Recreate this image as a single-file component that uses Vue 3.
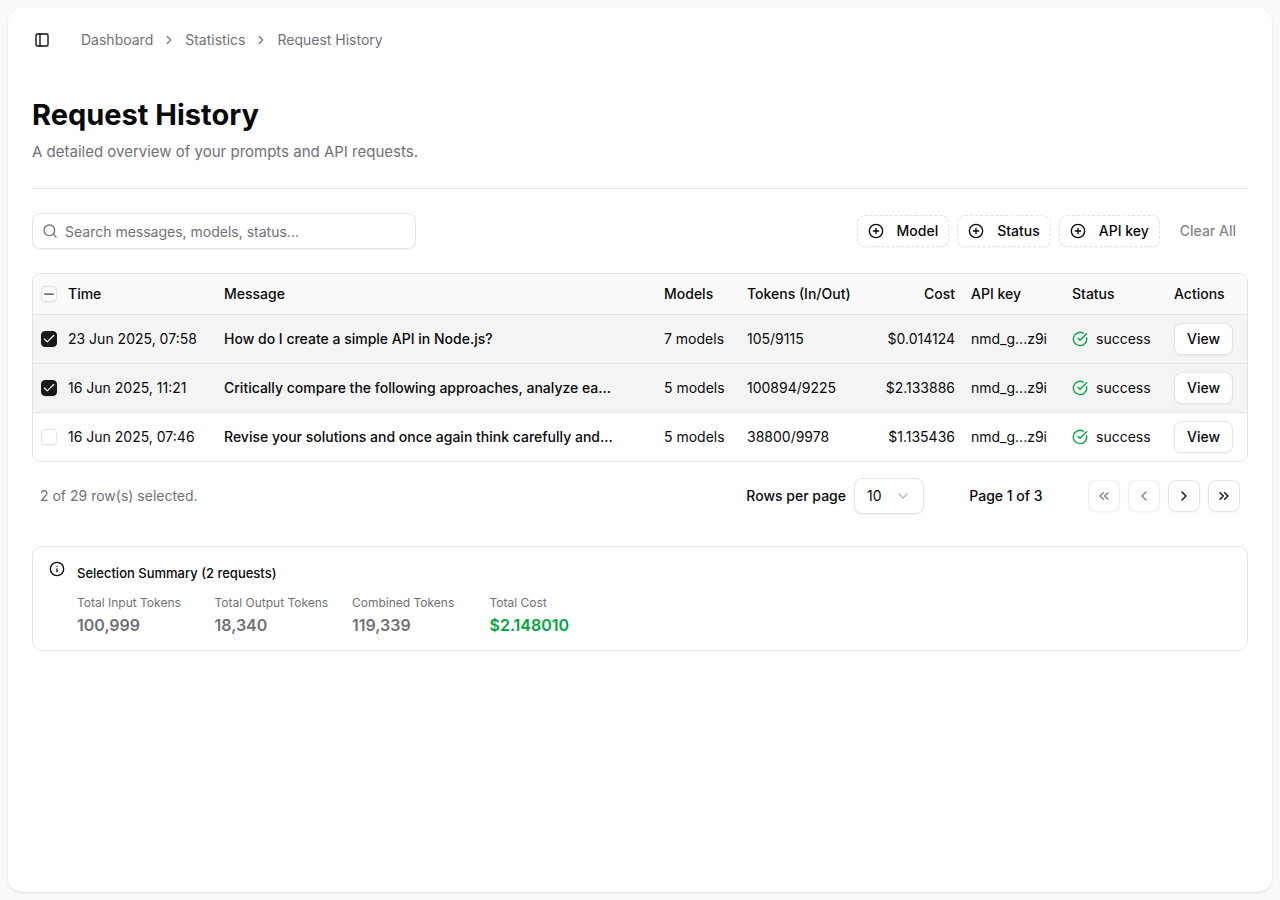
<script setup>
import { computed, ref } from 'vue'

const crumbs = ['Dashboard', 'Statistics', 'Request History']
const filters = ['Model', 'Status', 'API key']
const search = ref('')
const pageSize = ref('10')

const rows = ref([
  { id: 1, time: '23 Jun 2025, 07:58', message: 'How do I create a simple API in Node.js?', models: '7 models', tokens: '105/9115', cost: '$0.014124', key: 'nmd_g...z9i', status: 'success', selected: true },
  { id: 2, time: '16 Jun 2025, 11:21', message: 'Critically compare the following approaches, analyze ea...', models: '5 models', tokens: '100894/9225', cost: '$2.133886', key: 'nmd_g...z9i', status: 'success', selected: true },
  { id: 3, time: '16 Jun 2025, 07:46', message: 'Revise your solutions and once again think carefully and...', models: '5 models', tokens: '38800/9978', cost: '$1.135436', key: 'nmd_g...z9i', status: 'success', selected: false },
])

const picked = computed(() => rows.value.filter((r) => r.selected))
const allSelected = computed(() => picked.value.length === rows.value.length)
const someSelected = computed(() => picked.value.length > 0 && !allSelected.value)

function toggleAll(event) {
  const on = event.target.checked
  rows.value.forEach((r) => { r.selected = on })
}

const summary = computed(() => {
  const part = (i) => picked.value.reduce((sum, r) => sum + Number(r.tokens.split('/')[i]), 0)
  const cost = picked.value.reduce((sum, r) => sum + Number(r.cost.slice(1)), 0)
  const fmt = (n) => n.toLocaleString('en-US')
  return [
    { label: 'Total Input Tokens', value: fmt(part(0)) },
    { label: 'Total Output Tokens', value: fmt(part(1)) },
    { label: 'Combined Tokens', value: fmt(part(0) + part(1)) },
    { label: 'Total Cost', value: '$' + cost.toFixed(6), money: true },
  ]
})
</script>

<template>
  <div class="shell">
    <div class="panel">
      <header class="topbar">
        <button class="toggle" type="button" aria-label="Toggle sidebar">
          <svg class="icon" viewBox="0 0 24 24"><rect width="18" height="18" x="3" y="3" rx="2" /><path d="M9 3v18" /></svg>
        </button>
        <nav class="crumbs" aria-label="Breadcrumb">
          <template v-for="(crumb, i) in crumbs" :key="crumb">
            <svg v-if="i" class="icon small" viewBox="0 0 24 24"><path d="m9 18 6-6-6-6" /></svg>
            <a href="#">{{ crumb }}</a>
          </template>
        </nav>
      </header>

      <main class="content">
        <div class="heading">
          <h1>Request History</h1>
          <p>A detailed overview of your prompts and API requests.</p>
        </div>

        <div class="toolbar">
          <div class="search">
            <svg class="icon" viewBox="0 0 24 24"><circle cx="11" cy="11" r="8" /><path d="m21 21-4.3-4.3" /></svg>
            <input v-model="search" type="text" aria-label="Search requests" placeholder="Search messages, models, status..." />
          </div>
          <div class="filters">
            <button v-for="f in filters" :key="f" class="btn filter" type="button">
              <svg class="icon" viewBox="0 0 24 24"><circle cx="12" cy="12" r="10" /><path d="M8 12h8M12 8v8" /></svg>
              <span>{{ f }}</span>
            </button>
            <button class="clear" type="button" disabled>Clear All</button>
          </div>
        </div>

        <div class="table-box">
          <table>
            <colgroup>
              <col class="c-check" /><col class="c-time" /><col /><col class="c-models" /><col class="c-tokens" />
              <col class="c-cost" /><col class="c-key" /><col class="c-status" /><col class="c-actions" />
            </colgroup>
            <thead>
              <tr>
                <th class="pick">
                  <span class="check">
                    <input type="checkbox" aria-label="Select all" :checked="allSelected" :indeterminate="someSelected" @change="toggleAll" />
                    <svg v-if="someSelected" class="dash" viewBox="0 0 24 24"><path d="M5 12h14" /></svg>
                    <svg v-else-if="allSelected" class="tick" viewBox="0 0 24 24"><path d="M20 6 9 17l-5-5" /></svg>
                  </span>
                </th>
                <th>Time</th>
                <th>Message</th>
                <th>Models</th>
                <th>Tokens (In/Out)</th>
                <th class="right">Cost</th>
                <th>API key</th>
                <th>Status</th>
                <th>Actions</th>
              </tr>
            </thead>
            <tbody>
              <tr v-for="r in rows" :key="r.id" :class="{ selected: r.selected }">
                <td class="pick">
                  <span class="check">
                    <input v-model="r.selected" type="checkbox" :aria-label="'Select ' + r.message" />
                    <svg v-if="r.selected" class="tick" viewBox="0 0 24 24"><path d="M20 6 9 17l-5-5" /></svg>
                  </span>
                </td>
                <td>{{ r.time }}</td>
                <td class="message">{{ r.message }}</td>
                <td>{{ r.models }}</td>
                <td>{{ r.tokens }}</td>
                <td class="right">{{ r.cost }}</td>
                <td>{{ r.key }}</td>
                <td>
                  <div class="status">
                    <svg class="icon" viewBox="0 0 24 24"><path d="M21.801 10A10 10 0 1 1 17 3.335" /><path d="m9 11 3 3L22 4" /></svg>
                    <span>{{ r.status }}</span>
                  </div>
                </td>
                <td><button class="btn view" type="button">View</button></td>
              </tr>
            </tbody>
          </table>
        </div>

        <div class="pagination">
          <p class="count">{{ picked.length }} of 29 row(s) selected.</p>
          <div class="pager">
            <div class="size">
              <label for="page-size">Rows per page</label>
              <div class="select">
                <select id="page-size" v-model="pageSize">
                  <option>10</option>
                  <option>20</option>
                  <option>50</option>
                </select>
                <svg class="icon" viewBox="0 0 24 24"><path d="m6 9 6 6 6-6" /></svg>
              </div>
            </div>
            <span class="page">Page 1 of 3</span>
            <div class="steps">
              <button class="btn step" type="button" aria-label="First page" disabled>
                <svg class="icon" viewBox="0 0 24 24"><path d="m11 17-5-5 5-5M18 17l-5-5 5-5" /></svg>
              </button>
              <button class="btn step" type="button" aria-label="Previous page" disabled>
                <svg class="icon" viewBox="0 0 24 24"><path d="m15 18-6-6 6-6" /></svg>
              </button>
              <button class="btn step" type="button" aria-label="Next page">
                <svg class="icon" viewBox="0 0 24 24"><path d="m9 18 6-6-6-6" /></svg>
              </button>
              <button class="btn step" type="button" aria-label="Last page">
                <svg class="icon" viewBox="0 0 24 24"><path d="m6 17 5-5-5-5M13 17l5-5-5-5" /></svg>
              </button>
            </div>
          </div>
        </div>

        <section class="summary">
          <svg class="icon" viewBox="0 0 24 24"><circle cx="12" cy="12" r="10" /><path d="M12 16v-4M12 8h.01" /></svg>
          <div class="summary-body">
            <h2>Selection Summary ({{ picked.length }} requests)</h2>
            <dl>
              <div v-for="s in summary" :key="s.label">
                <dt>{{ s.label }}</dt>
                <dd :class="{ money: s.money }">{{ s.value }}</dd>
              </div>
            </dl>
          </div>
        </section>
      </main>
    </div>
  </div>
</template>

<style>
body {
  margin: 0;
  background: #fafafa;
}
</style>

<style scoped>
* {
  box-sizing: border-box;
}

.shell {
  display: flex;
  min-height: 100vh;
  padding: 8px;
  background: #fafafa;
  color: #09090b;
  font-family: Inter, "Liberation Sans", sans-serif;
  font-size: 14px;
  line-height: 20px;
}

.panel {
  flex: 1;
  min-width: 0;
  border-radius: 14px;
  background: #fff;
  box-shadow: 0 1px 3px rgba(0, 0, 0, 0.1), 0 1px 2px -1px rgba(0, 0, 0, 0.1);
}

h1, h2, p, dl, dd {
  margin: 0;
}

button, input, select {
  margin: 0;
  font: inherit;
  color: inherit;
}

button {
  display: inline-flex;
  align-items: center;
  justify-content: center;
  padding: 0;
  border: 0;
  background: none;
  font-weight: 500;
}

.icon {
  width: 16px;
  height: 16px;
  flex: none;
  fill: none;
  stroke: currentColor;
  stroke-width: 2;
  stroke-linecap: round;
  stroke-linejoin: round;
}

.icon.small {
  width: 14px;
  height: 14px;
}

.topbar {
  display: flex;
  align-items: center;
  gap: 25px;
  height: 64px;
  padding: 0 20px;
}

.toggle {
  width: 28px;
  height: 28px;
}

.crumbs {
  display: flex;
  align-items: center;
  gap: 9px;
  color: #71717b;
}

.crumbs a {
  color: inherit;
  text-decoration: none;
}

.content {
  padding: 24px;
}

.heading {
  padding-bottom: 24px;
  border-bottom: 1px solid #e4e4e7;
}

h1 {
  font-size: 29px;
  line-height: 38px;
  font-weight: 700;
}

.heading p {
  margin-top: 6px;
  color: #71717b;
  font-size: 15px;
  line-height: 24px;
}

.toolbar {
  display: flex;
  align-items: center;
  justify-content: space-between;
  gap: 16px;
  margin-top: 24px;
}

.search {
  display: grid;
  align-items: center;
  flex: 0 1 384px;
}

.search .icon,
.search input {
  grid-area: 1 / 1;
}

.search .icon {
  z-index: 1;
  margin-left: 10px;
  color: #71717b;
  pointer-events: none;
}

.search input {
  width: 100%;
  height: 36px;
  padding: 0 12px 0 32px;
  border: 1px solid #e4e4e7;
  border-radius: 8px;
  background: #fff;
  box-shadow: 0 1px 2px rgba(0, 0, 0, 0.05);
}

.search input::placeholder {
  color: #71717b;
  opacity: 1;
}

.filters {
  display: flex;
  align-items: center;
  gap: 8px;
}

.btn {
  height: 32px;
  border: 1px solid #e4e4e7;
  border-radius: 8px;
  background: #fff;
  box-shadow: 0 1px 2px rgba(0, 0, 0, 0.05);
}

.filter {
  gap: 13px;
  padding: 0 10px;
  border-style: dashed;
}

.clear {
  height: 32px;
  padding: 0 12px;
  opacity: 0.5;
}

.table-box {
  margin-top: 24px;
  overflow: hidden;
  border: 1px solid #e4e4e7;
  border-radius: 8px;
}

table {
  width: 100%;
  table-layout: fixed;
  border-collapse: separate;
  border-spacing: 0;
}

.c-check { width: 27px; }
.c-time { width: 156px; }
.c-models { width: 83px; }
.c-tokens { width: 117px; }
.c-cost { width: 107px; }
.c-key { width: 101px; }
.c-status { width: 102px; }
.c-actions { width: 81px; }

th, td {
  padding: 0 8px;
  border-bottom: 1px solid #e4e4e7;
  text-align: left;
  white-space: nowrap;
}

th {
  height: 41px;
  background: #fafafa;
  font-weight: 500;
}

td {
  height: 49px;
}

tbody tr:last-child td {
  height: 48px;
  border-bottom: 0;
}

.selected td {
  background: #f4f4f4;
}

.pick {
  padding-right: 0;
}

.right {
  text-align: right;
}

.message {
  overflow: hidden;
  font-weight: 500;
  text-overflow: ellipsis;
}

.check {
  display: grid;
  width: 16px;
  height: 16px;
  place-items: center;
}

.check > * {
  grid-area: 1 / 1;
}

.check input {
  width: 16px;
  height: 16px;
  appearance: none;
  border: 1px solid #e4e4e7;
  border-radius: 4px;
  box-shadow: 0 1px 2px rgba(0, 0, 0, 0.05);
}

.check input:checked {
  border-color: #18181b;
  background: #18181b;
}

.tick, .dash {
  width: 14px;
  height: 14px;
  fill: none;
  stroke: #fff;
  stroke-width: 2;
  stroke-linecap: round;
  stroke-linejoin: round;
  pointer-events: none;
}

.dash {
  stroke: #71717b;
  stroke-width: 3;
}

.status {
  display: flex;
  align-items: center;
  gap: 8px;
}

.status .icon {
  color: #00a63e;
}

.view {
  padding: 0 12px;
}

.pagination {
  display: flex;
  align-items: center;
  justify-content: space-between;
  margin-top: 16px;
  padding: 0 8px;
}

.count {
  color: #71717b;
}

.pager {
  display: flex;
  align-items: center;
  gap: 32px;
  font-weight: 500;
}

.size, .steps {
  display: flex;
  align-items: center;
  gap: 8px;
}

.select {
  display: grid;
  align-items: center;
  width: 70px;
}

.select > * {
  grid-area: 1 / 1;
}

.select select {
  width: 100%;
  height: 36px;
  padding: 0 12px;
  appearance: none;
  border: 1px solid #e4e4e7;
  border-radius: 8px;
  background: #fff;
  box-shadow: 0 1px 2px rgba(0, 0, 0, 0.05);
  font-weight: 400;
}

.select .icon {
  justify-self: end;
  margin-right: 13px;
  color: #71717b;
  opacity: 0.5;
  pointer-events: none;
}

.page {
  width: 100px;
  text-align: center;
}

.step {
  width: 32px;
}

.step:disabled {
  opacity: 0.5;
}

.summary {
  display: flex;
  gap: 12px;
  margin-top: 32px;
  padding: 12px 16px;
  border: 1px solid #e4e4e7;
  border-radius: 10px;
}

.summary > .icon {
  margin-top: 2px;
}

.summary-body {
  flex: 1;
  padding: 4px 0 1px;
}

h2 {
  font-size: 13px;
  line-height: 20px;
  font-weight: 500;
}

dl {
  display: grid;
  grid-template-columns: repeat(4, 1fr);
  gap: 16px;
  max-width: 534px;
  margin-top: 12px;
  color: #71717b;
}

dt {
  font-size: 12px;
  line-height: 16px;
  white-space: nowrap;
}

dd {
  margin-top: 2px;
  font-size: 16px;
  line-height: 24px;
  font-weight: 600;
}

.money {
  color: #00a63e;
}
</style>
